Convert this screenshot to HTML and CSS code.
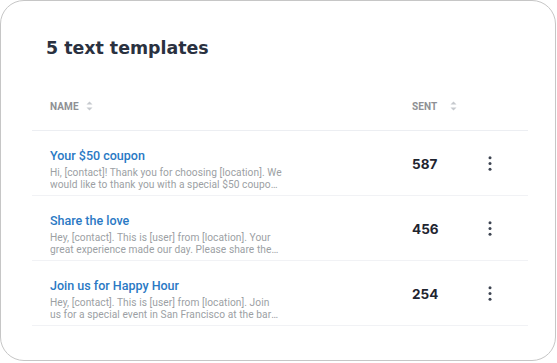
FILE: index.html
```html
<!DOCTYPE html>
<html lang="en">
<head>
<meta charset="utf-8">
<title>Text templates</title>
<link rel="stylesheet" href="styles.css">
</head>
<body>
<div class="card">
  <h1 class="title">5 text templates</h1>
  <div class="table">
    <div class="row head">
      <div class="th th-name">NAME
        <svg class="sort" width="7" height="10" viewBox="0 0 7 10"><polygon points="0.5,3.5 3.5,0.5 6.5,3.5"/><polygon points="0.5,6.5 3.5,9.5 6.5,6.5"/></svg>
      </div>
      <div class="th th-sent">SENT
        <svg class="sort" width="7" height="10" viewBox="0 0 7 10"><polygon points="0.5,3.5 3.5,0.5 6.5,3.5"/><polygon points="0.5,6.5 3.5,9.5 6.5,6.5"/></svg>
      </div>
      <div></div>
    </div>
    <div class="row item">
      <div class="name">
        <div class="tname">Your $50 coupon</div>
        <div class="desc">Hi, [contact]! Thank you for choosing [location]. We would like to thank you with a special $50 coupon for your next visit.</div>
      </div>
      <div class="sent">587</div>
      <div class="act"><svg width="4" height="15" viewBox="0 0 4 15"><circle cx="2" cy="1.8" r="1.5"/><circle cx="2" cy="7.5" r="1.5"/><circle cx="2" cy="13.2" r="1.5"/></svg></div>
    </div>
    <div class="row item">
      <div class="name">
        <div class="tname">Share the love</div>
        <div class="desc">Hey, [contact]. This is [user] from [location]. Your great experience made our day. Please share the love with a review.</div>
      </div>
      <div class="sent">456</div>
      <div class="act"><svg width="4" height="15" viewBox="0 0 4 15"><circle cx="2" cy="1.8" r="1.5"/><circle cx="2" cy="7.5" r="1.5"/><circle cx="2" cy="13.2" r="1.5"/></svg></div>
    </div>
    <div class="row item">
      <div class="name">
        <div class="tname">Join us for Happy Hour</div>
        <div class="desc">Hey, [contact]. This is [user] from [location]. Join us for a special event in San Francisco at the bar this Friday.</div>
      </div>
      <div class="sent">254</div>
      <div class="act"><svg width="4" height="15" viewBox="0 0 4 15"><circle cx="2" cy="1.8" r="1.5"/><circle cx="2" cy="7.5" r="1.5"/><circle cx="2" cy="13.2" r="1.5"/></svg></div>
    </div>
  </div>
</div>
</body>
</html>
```

FILE: styles.css
```css
html, body {
  margin: 0;
  padding: 0;
  background: #ffffff;
}

.card {
  box-sizing: border-box;
  width: 556px;
  height: 361px;
  border: 1px solid #c6c6c6;
  border-radius: 24px;
  background: #ffffff;
  padding: 35px 0 0 0;
  font-family: Roboto, "Liberation Sans", sans-serif;
}

.title {
  margin: 0 0 22px 45px;
  font-family: "DejaVu Sans", "Liberation Sans", sans-serif;
  font-weight: 700;
  font-size: 17.4px;
  line-height: 24px;
  color: #2a3140;
}

.table {
  margin-left: 31px;
  width: 496px;
}

.row {
  display: grid;
  grid-template-columns: 380px 66px 50px;
}

.head {
  height: 48px;
  align-items: center;
  border-bottom: 1px solid #eceef2;
}

.th {
  display: flex;
  align-items: center;
  font-family: Roboto, "Liberation Sans", sans-serif;
  font-weight: 700;
  font-size: 10px;
  color: #8e9094;
  letter-spacing: 0.1px;
}

.th-name {
  padding-left: 18px;
  gap: 7px;
}

.th-sent {
  gap: 13px;
}

.sort {
  fill: #c6c9ce;
  display: block;
}

.item {
  height: 64px;
  border-bottom: 1px solid #f1f2f5;
}

.name {
  padding: 17px 0 0 18px;
}

.tname {
  font-weight: 500;
  font-size: 12.5px;
  line-height: 16px;
  color: #2a79c4;
}

.desc {
  margin-top: 3px;
  width: 232px;
  font-size: 10.2px;
  line-height: 11.5px;
  letter-spacing: 0.05px;
  color: #9c9fa4;
  display: -webkit-box;
  -webkit-line-clamp: 2;
  -webkit-box-orient: vertical;
  overflow: hidden;
}

.sent {
  align-self: center;
  padding-top: 2px;
  font-family: Inter, "Liberation Sans", sans-serif;
  font-weight: 700;
  font-size: 13.5px;
  color: #1f2530;
}

.act {
  align-self: center;
  padding-left: 10px;
  display: flex;
}

.act svg {
  fill: #3d4451;
  display: block;
}
```
